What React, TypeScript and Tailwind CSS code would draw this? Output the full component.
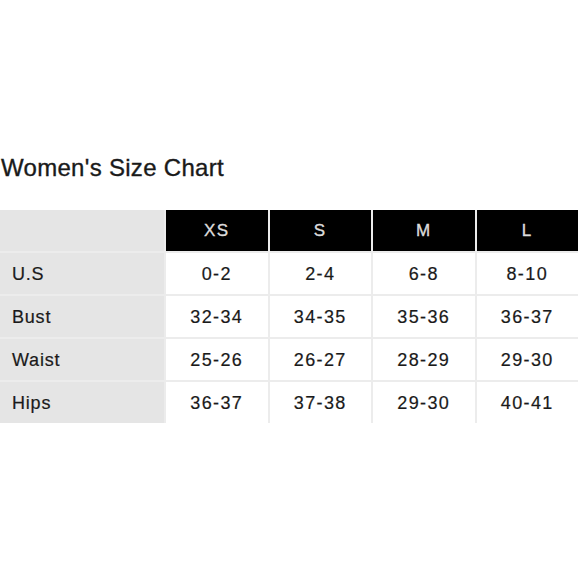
import React from "react";

const sizes = ["XS", "S", "M", "L"];

const rows: { label: string; values: string[] }[] = [
  { label: "U.S", values: ["0-2", "2-4", "6-8", "8-10"] },
  { label: "Bust", values: ["32-34", "34-35", "35-36", "36-37"] },
  { label: "Waist", values: ["25-26", "26-27", "28-29", "29-30"] },
  { label: "Hips", values: ["36-37", "37-38", "29-30", "40-41"] },
];

export default function App() {
  return (
    <div className="w-[580px] h-[580px] bg-white text-[#1a1a1a] font-['Liberation_Sans',Arial,sans-serif] overflow-hidden">
      {/* Title */}
      <h1 className="pt-[156px] pl-px text-[24px] leading-none tracking-[0.3px] text-[#1a1a1a] [-webkit-text-stroke:0.35px_#1a1a1a]">
        Women's Size Chart
      </h1>

      {/* Chart */}
      <div className="mt-[30px] w-[578px] grid grid-cols-[164px_repeat(4,1fr)] auto-rows-[41px] gap-[2px] bg-[#ececec] [-webkit-text-stroke:0.2px_#1a1a1a]">
        <div className="bg-[#e5e5e5]" />
        {sizes.map((s) => (
          <div
            key={s}
            className="bg-black text-[#dcdcdc] text-[17px] tracking-[1.5px] pt-px flex items-center justify-center [-webkit-text-stroke:0.35px_#dcdcdc]"
          >
            {s}
          </div>
        ))}

        {rows.map((row) => (
          <React.Fragment key={row.label}>
            <div className="bg-[#e5e5e5] pl-[12px] pt-[2px] text-[18px] tracking-[0.8px] flex items-center">
              {row.label}
            </div>
            {row.values.map((v, i) => (
              <div
                key={i}
                className="bg-white pt-[2px] text-[18px] tracking-[1.4px] flex items-center justify-center"
              >
                {v}
              </div>
            ))}
          </React.Fragment>
        ))}
      </div>
    </div>
  );
}
